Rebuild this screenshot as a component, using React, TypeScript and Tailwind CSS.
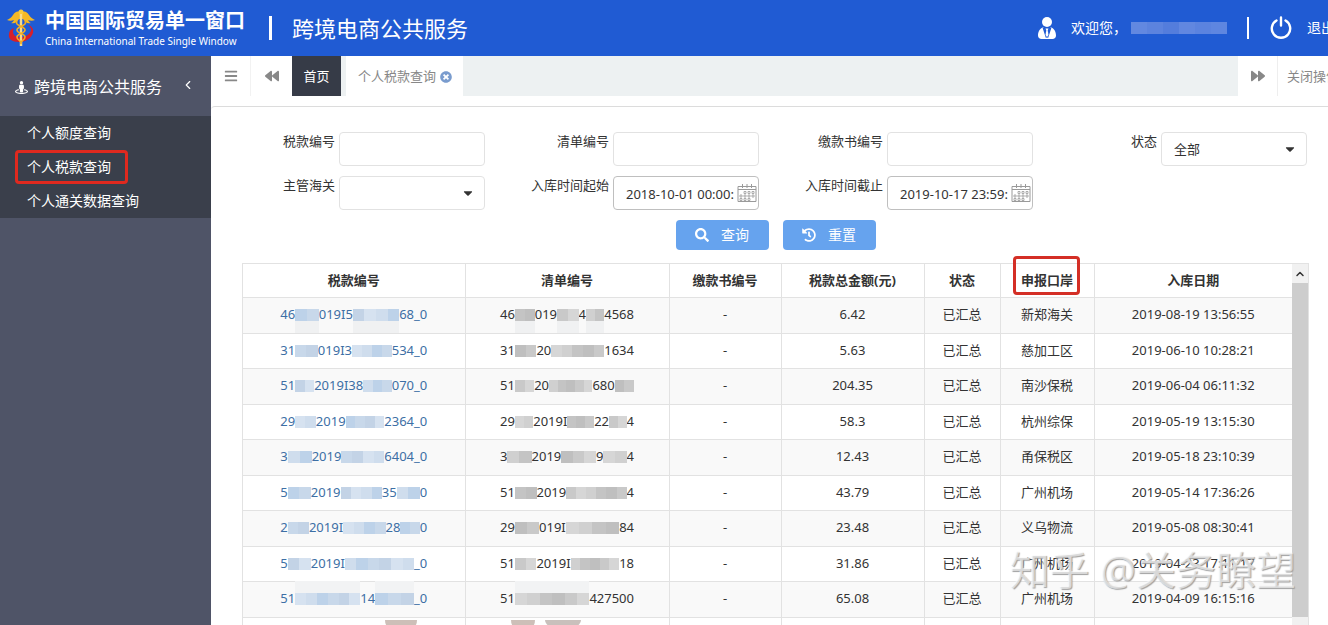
import type { ReactNode } from 'react';
import {
  FaBackward,
  FaBars,
  FaCaretDown,
  FaForward,
  FaHistory,
  FaSearch,
  FaStreetView,
  FaTimesCircle,
} from 'react-icons/fa';
import { ChevronLeft, ChevronUp } from 'lucide-react';

// a string is readable text, a number is the relative width of a masked stretch
type Segment = string | number;

type TaxRow = {
  taxNo: Segment[];
  listNo: Segment[];
  amount: string;
  port: string;
  date: string;
  haze?: 'above' | 'below';
};

const rows: TaxRow[] = [
  { taxNo: ['46', 24, '019I5', 47, '68_0'], listNo: ['46', 24, '019', 26, '4', 22, '4568'], amount: '6.42', port: '新郑海关', date: '2019-08-19 13:56:55', haze: 'below' },
  { taxNo: ['31', 24, '019I3', 42, '534_0'], listNo: ['31', 24, '20', 59, '1634'], amount: '5.63', port: '慈加工区', date: '2019-06-10 10:28:21' },
  { taxNo: ['51', 24, '2019I38', 36, '070_0'], listNo: ['51', 24, '20', 54, '680', 24], amount: '204.35', port: '南沙保税', date: '2019-06-04 06:11:32' },
  { taxNo: ['29', 23, '2019', 43, '2364_0'], listNo: ['29', 22, '2019I', 32, '22', 21, '4'], amount: '58.3', port: '杭州综保', date: '2019-05-19 13:15:30' },
  { taxNo: ['3', 24, '2019', 43, '6404_0'], listNo: ['3', 25, '2019', 36, '9', 24, '4'], amount: '12.43', port: '甬保税区', date: '2019-05-18 23:10:39' },
  { taxNo: ['5', 24, '2019', 43, '35', 24, '0'], listNo: ['51', 24, '2019', 67, '4'], amount: '43.79', port: '广州机场', date: '2019-05-14 17:36:26' },
  { taxNo: ['2', 24, '2019I', 48, '28', 22, '0'], listNo: ['29', 24, '019I', 53, '84'], amount: '23.48', port: '义乌物流', date: '2019-05-08 08:30:41' },
  { taxNo: ['5', 24, '2019I', 72, '_0'], listNo: ['51', 24, '2019I', 54, '18'], amount: '31.86', port: '广州机场', date: '2019-04-23 17:11:17' },
  { taxNo: ['51', 67, '14', 40, '_0'], listNo: ['51', 76, '427500'], amount: '65.08', port: '广州机场', date: '2019-04-09 16:15:16', haze: 'above' },
];

const columns = [
  { title: '税款编号', width: 'w-[222px]' },
  { title: '清单编号', width: 'w-[204px]' },
  { title: '缴款书编号', width: 'w-[112px]' },
  { title: '税款总金额(元)', width: 'w-[143px]' },
  { title: '状态', width: 'w-[76px]' },
  { title: '申报口岸', width: 'w-[94px]', marked: true },
  { title: '入库日期', width: 'w-[198px]' },
];

const blueTones = ['bg-[#cfdded]', 'bg-[#bdd2e9]', 'bg-[#c8d8ea]', 'bg-[#c3d3e6]', 'bg-[#d6e2f0]'];
const grayTones = ['bg-[#d0d0d0]', 'bg-[#c4c4c4]', 'bg-[#bfbfbf]', 'bg-[#c9c9c9]', 'bg-[#d6d6d6]'];

function Mask({ width, tones, seed, haze }: { width: number; tones: string[]; seed: number; haze?: 'above' | 'below' }) {
  const count = Math.max(2, Math.round(width / 12));
  return (
    <span className="relative flex h-3 basis-0" style={{ flexGrow: width }}>
      {Array.from({ length: count }, (_, i) => (
        <span key={i} className={`flex-1 ${tones[(i + seed) % tones.length]}`} />
      ))}
      {haze === 'below' && <span className="absolute inset-x-0 top-3 h-3 bg-[#f0f1f2]" />}
      {haze === 'above' && <span className="absolute inset-x-0 bottom-3 h-3 bg-[#f2f3f4]" />}
    </span>
  );
}

function MaskedNumber({ segments, tones, seed, haze }: { segments: Segment[]; tones: string[]; seed: number; haze?: 'above' | 'below' }) {
  return (
    <span className="flex w-full items-center">
      {segments.map((part, i) =>
        typeof part === 'string' ? (
          <span key={i}>{part}</span>
        ) : (
          <Mask key={i} width={part} tones={tones} seed={seed + i} haze={haze} />
        ),
      )}
    </span>
  );
}

function Emblem() {
  return (
    <svg className="h-10 w-8 shrink-0" viewBox="0 0 32 40" fill="none">
      <path d="M16 5C13 2 10 4 8 7c-2 3-4 4-6 5 2 1 5 1 7 0-1 2-2 3-3 3 4 1 6-1 8-4h4c2 3 4 5 8 4-1 0-2-1-3-3 2 1 5 1 7 0-2-1-4-2-6-5-2-3-5-5-8-2Z" fill="#f4b825" />
      <circle cx="16" cy="4" r="2.5" fill="#f8ca3c" />
      <path d="M23 17c4 1 6 4 5 8-2 6-8 9-14 9-7 0-11-3-10-8 0-3 2-5 5-6-2 4-1 8 4 9 6 1 12-2 13-7 0-2-1-4-3-5Z" fill="#d71f2b" />
      <path d="M16 6v32" stroke="#f9dc8a" strokeWidth="2.5" />
      <path d="M12 13c-3 5 8 5 8 9s-8 3-8 7 5 3 4 7M20 13c3 5-8 5-8 9s8 3 8 7-5 3-4 7" stroke="#f3ad22" strokeWidth="1.6" />
    </svg>
  );
}

function UserIcon() {
  return (
    <svg className="h-6 w-5" viewBox="0 0 20 24" fill="white">
      <circle cx="10" cy="6" r="5" />
      <path d="M6.5 11 10 22l3.5-11C17.500 12.500 19 16 19 19.500c0 2-1.500 3.500-3.500 3.500h-11C2.500 23 1 21.500 1 19.500 1 16 2.500 12.500 6.500 11Z" />
      <path d="m6.300 11.500 3.200 10M13.700 11.500l-3.200 10" stroke="#205bd3" strokeWidth="1.500" />
      <path d="M8.500 12.500h3l-.8 2 .8 4.500-1.500 2-1.500-2 .8-4.500Z" />
    </svg>
  );
}

function PowerIcon() {
  return (
    <svg className="size-6" viewBox="0 0 24 24" fill="none" stroke="white" strokeWidth="2.4" strokeLinecap="round">
      <path d="M12 1.5v8M7.5 4.5a9.2 9.2 0 1 0 9 0" />
    </svg>
  );
}

function CalendarIcon() {
  return (
    <svg className="h-5 w-5" viewBox="0 0 20 20" fill="none" stroke="#9a9a9a">
      <path d="M1 3.5h18v15H1zM1 6.5h18M5.5 1v4M10 1v4M14.5 1v4" />
      <path d="M7 8.5h2v2H7zM11 8.5h2v2h-2zM15 8.5h2v2h-2zM3 12h2v2H3zM7 12h2v2H7zM11 12h2v2h-2zM15 12h2v2h-2zM3 15.5h2v2H3zM7 15.5h2v2H7zM11 15.5h2v2h-2z" strokeWidth="0.8" />
    </svg>
  );
}

function Field({ id, label, children }: { id: string; label: string; children: ReactNode }) {
  return (
    <div className="flex items-start">
      <label htmlFor={id} className="flex-1 pr-1 text-right leading-[18px] whitespace-nowrap">
        {label}
      </label>
      <div className="relative w-[53.3%]">{children}</div>
    </div>
  );
}

function TextField({ id, label }: { id: string; label: string }) {
  return (
    <Field id={id} label={label}>
      <input id={id} type="text" className="block h-[34px] w-full rounded border border-[#e2e2e2] px-3" />
    </Field>
  );
}

function SelectField({ id, label, options }: { id: string; label: string; options: string[] }) {
  return (
    <Field id={id} label={label}>
      <select id={id} className="block h-[34px] w-full appearance-none rounded border border-[#e2e2e2] bg-white pt-0.5 pr-8 pl-3">
        {options.map((option) => (
          <option key={option}>{option}</option>
        ))}
      </select>
      <FaCaretDown className="pointer-events-none absolute top-2.5 right-2.5 size-3.5" />
    </Field>
  );
}

function DateField({ id, label, value }: { id: string; label: string; value: string }) {
  return (
    <Field id={id} label={label}>
      <input id={id} type="text" defaultValue={value} className="block h-[34px] w-full rounded border border-[#bfbfbf] pt-0.5 pr-6 pl-3" />
      <span className="pointer-events-none absolute top-[7px] right-0.5">
        <CalendarIcon />
      </span>
    </Field>
  );
}

function Header() {
  return (
    <header className="flex h-14 shrink-0 items-center bg-[#205bd3] text-white">
      <div className="flex items-center pl-[5px]">
        <Emblem />
        <div className="ml-2 pt-0.5 whitespace-nowrap">
          <div className="text-[20px] leading-6 font-bold">中国国际贸易单一窗口</div>
          <div className="text-[10px] leading-4">China International Trade Single Window</div>
        </div>
      </div>
      <div className="ml-6 h-6 w-[3px] bg-white" />
      <h1 className="ml-5 text-[22px] leading-7 whitespace-nowrap">跨境电商公共服务</h1>
      <div className="-mr-[7px] ml-auto flex items-center whitespace-nowrap text-sm">
        <UserIcon />
        <span className="ml-3.5">欢迎您，</span>
        <span className="ml-1 flex h-3 w-24 opacity-40">
          <span className="flex-1 bg-[#c5ccf4]" />
          <span className="flex-1 bg-[#b6bff0]" />
          <span className="flex-1 bg-[#a3b0ea]" />
          <span className="flex-1 bg-[#c2caf4]" />
          <span className="flex-1 bg-[#b4c0f2]" />
          <span className="flex-1 bg-[#bcc6f4]" />
        </span>
        <span className="ml-5 h-[22px] w-0.5 bg-white" />
        <button type="button" className="ml-5 flex items-center gap-3.5">
          <PowerIcon />
          退出
        </button>
      </div>
    </header>
  );
}

function Sidebar() {
  const items = ['个人额度查询', '个人税款查询', '个人通关数据查询'];
  return (
    <aside className="w-[211px] shrink-0 bg-[#4f5467] text-white">
      <button type="button" className="flex h-15 w-full items-center pt-0.5 pr-4 pl-[15px] text-base">
        <FaStreetView className="mr-1.5 size-[13px]" />
        跨境电商公共服务
        <ChevronLeft className="mb-1 ml-auto size-3.5" />
      </button>
      <nav className="bg-[#3a3f4b] text-sm">
        {items.map((item, i) => (
          <a key={item} href="#" className="relative flex h-[34px] items-center pl-[27px]">
            {item}
            {i === 1 && <span className="absolute inset-y-0 left-[15px] w-[113px] rounded-sm border-3 border-[#e0291f]" />}
          </a>
        ))}
      </nav>
    </aside>
  );
}

function TabBar() {
  return (
    <div className="flex h-10 items-stretch overflow-hidden bg-[#edf1f2] whitespace-nowrap text-[#888]">
      <button type="button" aria-label="菜单" className="flex w-10 items-center justify-center border-r border-[#f2f2f2] bg-white">
        <FaBars className="size-3.5" />
      </button>
      <button type="button" aria-label="向左" className="flex w-[41px] items-center justify-center bg-white">
        <FaBackward className="size-3.5" />
      </button>
      <a href="#" className="flex w-[49px] items-center justify-center bg-[#363b47] pt-0.5 text-white">
        首页
      </a>
      <a href="#" className="ml-[5px] flex w-[117px] items-center gap-1 bg-white pt-0.5 pl-3">
        个人税款查询
        <FaTimesCircle className="size-3 text-[#7a9cce]" />
      </a>
      <button type="button" aria-label="向右" className="ml-auto flex w-10 items-center justify-center border-r border-[#eee] bg-white">
        <FaForward className="size-3.5" />
      </button>
      <button type="button" className="w-[50px] overflow-hidden bg-white pt-0.5 pl-[9px] text-left">
        关闭操作
      </button>
    </div>
  );
}

function SearchForm() {
  return (
    <form>
      <div className="grid grid-cols-4 gap-y-2.5 pr-[21px]">
        <TextField id="taxNo" label="税款编号" />
        <TextField id="listNo" label="清单编号" />
        <TextField id="paymentNo" label="缴款书编号" />
        <SelectField id="status" label="状态" options={['全部', '已汇总']} />
        <SelectField id="customs" label="主管海关" options={['']} />
        <DateField id="dateFrom" label="入库时间起始" value="2018-10-01 00:00:00" />
        <DateField id="dateTo" label="入库时间截止" value="2019-10-17 23:59:59" />
      </div>
      <div className="mt-2.5 flex justify-center gap-3.5 pl-3 text-sm text-white">
        <button type="button" className="flex h-[30px] w-[93px] items-center justify-center gap-3 rounded bg-[#66a3ee]">
          <FaSearch className="size-3.5" />
          查询
        </button>
        <button type="button" className="flex h-[30px] w-[93px] items-center justify-center gap-3 rounded bg-[#66a3ee]">
          <FaHistory className="size-3.5" />
          重置
        </button>
      </div>
    </form>
  );
}

function TaxTable() {
  return (
    <div className="mt-[13px] mr-[19px] ml-[31px] flex border border-[#e2e2e2]">
      <table className="w-full flex-1 table-fixed border-collapse text-center whitespace-nowrap">
        <thead>
          <tr className="h-[33px] border-b border-[#e2e2e2]">
            {columns.map((col) => (
              <th key={col.title} className={`relative border-r border-[#e2e2e2] p-0 last:border-r-0 ${col.width}`}>
                {col.title}
                {col.marked && <span className="absolute -top-2 bottom-0.5 left-3 w-[67px] rounded-sm border-3 border-[#d42f26]" />}
              </th>
            ))}
          </tr>
        </thead>
        <tbody>
          {rows.map((row, i) => (
            <tr
              key={row.date}
              className={`border-b border-[#e2e2e2] *:border-r *:border-[#e2e2e2] *:p-0 *:last:border-r-0 ${i % 2 ? 'h-[35px]' : 'h-9 bg-[#f9f9f9]'}`}
            >
              <td>
                <a href="#" className="mx-auto flex w-[147px] text-[#3d6fa5]">
                  <MaskedNumber segments={row.taxNo} tones={blueTones} seed={i} haze={row.haze} />
                </a>
              </td>
              <td>
                <div className="mx-auto flex w-[134px]">
                  <MaskedNumber segments={row.listNo} tones={grayTones} seed={i} haze={row.haze} />
                </div>
              </td>
              <td>-</td>
              <td>{row.amount}</td>
              <td>已汇总</td>
              <td>{row.port}</td>
              <td>{row.date}</td>
            </tr>
          ))}
          <tr className="h-9 align-top *:border-r *:border-[#e2e2e2] *:p-0 *:last:border-r-0">
            <td>
              <span className="mt-0.5 ml-[142px] block h-3 w-8 rounded-b-xl bg-[#cdbfb8]" />
            </td>
            <td>
              <span className="mt-0.5 ml-[45px] flex gap-2.5">
                <span className="h-3 w-6 rounded-b-xl bg-[#cdbfb8]" />
                <span className="h-1.5 w-9 rounded-b-xl bg-[#c9c0bc]" />
              </span>
            </td>
            <td />
            <td />
            <td />
            <td />
            <td />
          </tr>
        </tbody>
      </table>
      <div className="mr-px flex w-4 shrink-0 flex-col bg-[#f1f1f1]">
        <span className="flex h-[19px] items-center justify-center">
          <ChevronUp className="size-3" strokeWidth={3} />
        </span>
        <span className="h-[334px] bg-[#cdcdcd]" />
      </div>
    </div>
  );
}

export default function App() {
  return (
    <div className="relative flex h-screen flex-col overflow-hidden bg-white font-['Noto_Sans','Noto_Sans_CJK_SC',sans-serif] text-[13px] text-[#333]">
      <Header />
      <div className="flex min-h-0 flex-1">
        <Sidebar />
        <main className="min-w-0 flex-1">
          <TabBar />
          <section className="mt-2.5 rounded-tl border-t border-[#dcdcdc] pt-[25px]">
            <SearchForm />
            <TaxTable />
          </section>
        </main>
      </div>
      <div className="pointer-events-none absolute right-8 bottom-7 text-[40px] leading-[54px] whitespace-nowrap text-white/60 [text-shadow:1px_1px_1px_#a0a0a0]">
        知乎 @关务瞭望
      </div>
    </div>
  );
}
